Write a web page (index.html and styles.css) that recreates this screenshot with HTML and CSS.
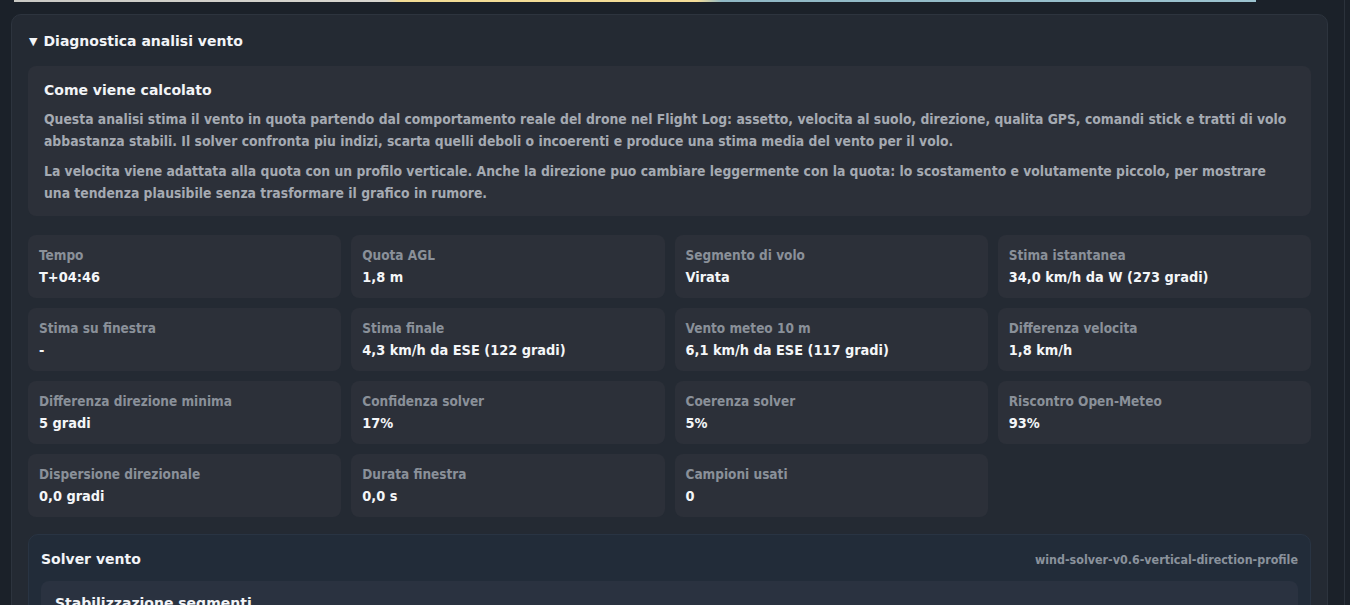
FILE: index.html
```html
<!DOCTYPE html>
<html lang="it">
<head>
<meta charset="utf-8">
<title>Diagnostica analisi vento</title>
<link rel="stylesheet" href="styles.css">
</head>
<body>
<div class="page">
  <div class="map-edge"></div>
  <details class="panel" open>
    <summary class="panel-title">Diagnostica analisi vento</summary>
    <section class="info">
      <h3 class="info-title">Come viene calcolato</h3>
      <p class="info-text">Questa analisi stima il vento in quota partendo dal comportamento reale del drone nel Flight Log: assetto, velocita al suolo, direzione, qualita GPS, comandi stick e tratti di volo abbastanza stabili. Il solver confronta piu indizi, scarta quelli deboli o incoerenti e produce una stima media del vento per il volo.</p>
      <p class="info-text">La velocita viene adattata alla quota con un profilo verticale. Anche la direzione puo cambiare leggermente con la quota: lo scostamento e volutamente piccolo, per mostrare una tendenza plausibile senza trasformare il grafico in rumore.</p>
    </section>
    <div class="stats">
      <div class="stat"><div class="stat-label">Tempo</div><div class="stat-value">T+04:46</div></div>
      <div class="stat"><div class="stat-label">Quota AGL</div><div class="stat-value">1,8 m</div></div>
      <div class="stat"><div class="stat-label">Segmento di volo</div><div class="stat-value">Virata</div></div>
      <div class="stat"><div class="stat-label">Stima istantanea</div><div class="stat-value">34,0 km/h da W (273 gradi)</div></div>
      <div class="stat"><div class="stat-label">Stima su finestra</div><div class="stat-value">-</div></div>
      <div class="stat"><div class="stat-label">Stima finale</div><div class="stat-value">4,3 km/h da ESE (122 gradi)</div></div>
      <div class="stat"><div class="stat-label">Vento meteo 10 m</div><div class="stat-value">6,1 km/h da ESE (117 gradi)</div></div>
      <div class="stat"><div class="stat-label">Differenza velocita</div><div class="stat-value">1,8 km/h</div></div>
      <div class="stat"><div class="stat-label">Differenza direzione minima</div><div class="stat-value">5 gradi</div></div>
      <div class="stat"><div class="stat-label">Confidenza solver</div><div class="stat-value">17%</div></div>
      <div class="stat"><div class="stat-label">Coerenza solver</div><div class="stat-value">5%</div></div>
      <div class="stat"><div class="stat-label">Riscontro Open-Meteo</div><div class="stat-value">93%</div></div>
      <div class="stat"><div class="stat-label">Dispersione direzionale</div><div class="stat-value">0,0 gradi</div></div>
      <div class="stat"><div class="stat-label">Durata finestra</div><div class="stat-value">0,0 s</div></div>
      <div class="stat"><div class="stat-label">Campioni usati</div><div class="stat-value">0</div></div>
    </div>
    <section class="solver">
      <div class="solver-head">
        <h3 class="solver-title">Solver vento</h3>
        <span class="solver-version">wind-solver-v0.6-vertical-direction-profile</span>
      </div>
      <div class="solver-block">
        <h4 class="solver-block-title">Stabilizzazione segmenti</h4>
      </div>
    </section>
  </details>
</div>
</body>
</html>
```
FILE: styles.css
```css
html, body {
  margin: 0;
  padding: 0;
  background: #1b2129;
  height: 100%;
  overflow: hidden;
}

.page {
  width: 1345px;
  height: 605px;
  border-right: 1px solid #2b323b;
  box-sizing: border-box;
  padding-left: 11px;
  font-family: "DejaVu Sans Condensed", "DejaVu Sans", sans-serif;
  color: #f1f3f6;
}

.map-edge {
  width: 1242px;
  margin-left: 3px;
  height: 2px;
  margin-bottom: 12px;
  background: linear-gradient(90deg, #c9c9c4 0%, #d8d6cf 30%, #f2dc95 31%, #f4dd98 55%, #8fb7c4 57%, #9cc3cf 100%);
}

.panel {
  width: 1317px;
  box-sizing: border-box;
  background: #242a33;
  border: 1px solid #2d343e;
  border-radius: 10px;
  padding: 16px 16px 20px;
}

.panel-title {
  font-family: "DejaVu Sans", sans-serif;
  font-weight: bold;
  font-size: 14px;
  line-height: 20px;
  color: #f2f4f7;
  cursor: pointer;
  margin: 0 0 13px 1px;
  list-style: none;
}

.panel-title::-webkit-details-marker { display: none; }

.panel-title::before {
  content: "\25BC";
  font-size: 11px;
  margin-right: 6px;
  position: relative;
  top: -1px;
}

.info {
  background: #2c3039;
  border-radius: 8px;
  padding: 14px 16px 12px;
}

.info-title {
  margin: 0 0 8px;
  font-family: "DejaVu Sans", sans-serif;
  font-size: 14px;
  line-height: 20px;
  font-weight: bold;
  color: #f2f4f7;
}

.info-text {
  margin: 0 0 8px;
  font-size: 13.8px;
  line-height: 22px;
  font-weight: bold;
  color: #a5aab2;
}

.info-text:last-child { margin-bottom: 0; }

.stats {
  margin-top: 19px;
  display: grid;
  grid-template-columns: repeat(4, 1fr);
  column-gap: 10px;
  row-gap: 10px;
}

.stat {
  background: #2c3039;
  border-radius: 8px;
  height: 63px;
  box-sizing: border-box;
  padding: 11px 11px 10px;
}

.stat-label {
  font-size: 13.5px;
  line-height: 18px;
  font-weight: bold;
  color: #8a9099;
  margin-bottom: 3px;
}

.stat-value {
  font-size: 14.4px;
  line-height: 20px;
  font-weight: bold;
  color: #f4f6f8;
}

.solver {
  margin-top: 17px;
  background: #222c39;
  border: 1px solid #293443;
  border-radius: 10px;
  padding: 14px 12px 12px;
}

.solver-head {
  display: flex;
  justify-content: space-between;
  align-items: center;
  margin-bottom: 12px;
}

.solver-title {
  margin: 0;
  font-family: "DejaVu Sans", sans-serif;
  font-size: 14px;
  line-height: 20px;
  font-weight: bold;
  color: #f2f4f7;
}

.solver-version {
  font-size: 12.4px;
  font-weight: bold;
  color: #8a929c;
}

.solver-block {
  background: #2a3240;
  border-radius: 8px;
  padding: 12px 14px;
  height: 60px;
}

.solver-block-title {
  margin: 0;
  font-family: "DejaVu Sans", sans-serif;
  font-size: 14px;
  line-height: 20px;
  font-weight: bold;
  color: #f2f4f7;
}
```
